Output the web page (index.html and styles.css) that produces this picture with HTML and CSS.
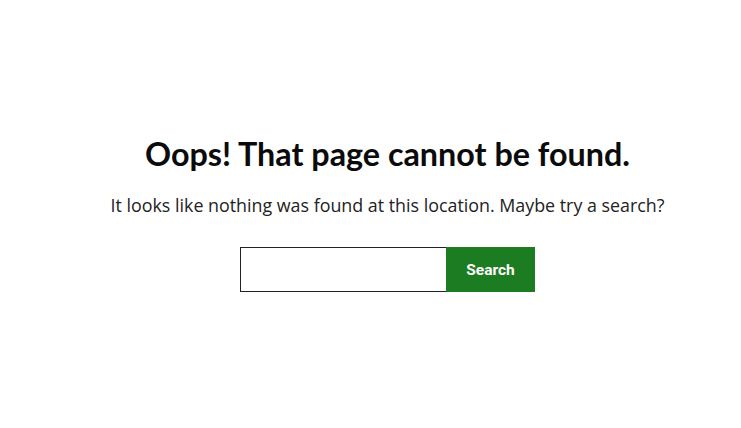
FILE: index.html
```html
<!DOCTYPE html>
<html>
<head>
<meta charset="utf-8">
<link rel="stylesheet" href="styles.css">
</head>
<body>
<main class="page">
  <h1 class="title">Oops! That page cannot be found.</h1>
  <p class="lead">It looks like nothing was found at this location. Maybe try a search?</p>
  <form class="search" onsubmit="return false">
    <input class="search-input" type="search" aria-label="Search">
    <button class="search-button" type="submit">Search</button>
  </form>
</main>
</body>
</html>
```
FILE: styles.css
```css
html, body {
  margin: 0;
  padding: 0;
  background: #fff;
}
.page {
  display: flex;
  flex-direction: column;
  align-items: center;
  padding-top: 134px;
  padding-left: 34px;
  color: #111;
}
.title {
  margin: 0;
  font-family: "Lato", sans-serif;
  font-weight: 700;
  font-size: 32.3px;
  line-height: 40px;
  color: #0b0b0b;
}
.lead {
  margin: 18px 0 0;
  font-family: "Open Sans", sans-serif;
  font-size: 17.85px;
  line-height: 26px;
  color: #222;
}
.search {
  display: flex;
  margin-top: 29px;
}
.search-input {
  box-sizing: border-box;
  width: 206px;
  height: 45px;
  border: 1px solid #222;
  border-right: none;
  margin: 0;
  padding: 0 10px;
  font-size: 16px;
  outline: none;
}
.search-button {
  box-sizing: border-box;
  width: 89px;
  height: 45px;
  margin: 0;
  border: none;
  background: #1c7c22;
  color: #fff;
  font-family: "Roboto", sans-serif;
  font-weight: 700;
  font-size: 15.5px;
  cursor: pointer;
}
```
